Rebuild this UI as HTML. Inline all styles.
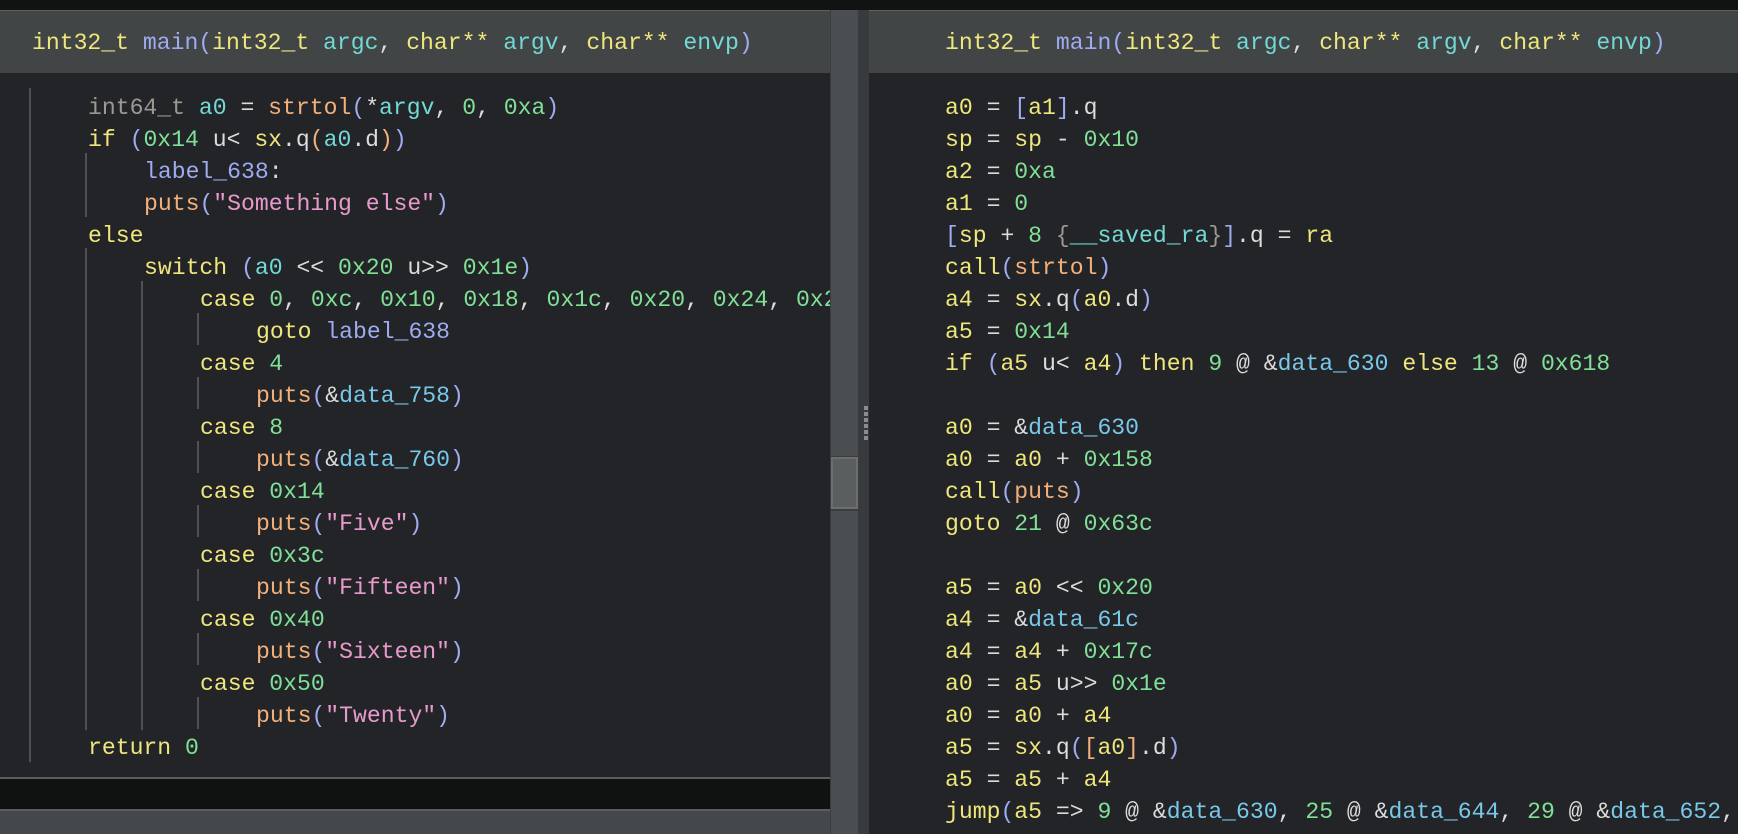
<!DOCTYPE html>
<html><head><meta charset="utf-8"><style>
*{margin:0;padding:0;box-sizing:border-box}
body{width:1738px;height:834px;background:#232427;position:relative;overflow:hidden;font-family:"Liberation Mono",monospace;font-size:23.1px;color:#dcdcdc}
.a{position:absolute}
.l{position:absolute;white-space:pre;line-height:32px;height:32px}
.y{color:#efe67c}.b{color:#9eabf0}.c{color:#72d9d6}.g{color:#80e096}.o{color:#f3b07a}.p{color:#e99acd}.w{color:#dcdcdc}.gr{color:#9c9893}.sc{color:#78c8ea}
.v{position:absolute;width:2px;background:#4e5053}
</style></head><body>
<div class="a" style="left:0;top:0;width:1738px;height:10px;background:#111313"></div>
<div class="a" style="left:0;top:10px;width:830px;height:767px;background:#232427;overflow:hidden">
 <div class="a" style="left:0;top:0;width:830px;height:63px;background:#424546;border-top:1px solid #5e6162"></div>
 <div class="l" style="left:32px;top:17px"><span class="y">int32_t</span> <span class="b">main(</span><span class="y">int32_t</span> <span class="c">argc</span>, <span class="y">char**</span> <span class="c">argv</span>, <span class="y">char**</span> <span class="c">envp</span><span class="b">)</span></div>
 <div class="v" style="left:29px;top:78px;height:674px"></div>
 <div class="v" style="left:85px;top:143px;height:64px"></div>
 <div class="v" style="left:85px;top:238px;height:482px"></div>
 <div class="v" style="left:141px;top:271px;height:449px"></div>
 <div class="v" style="left:197px;top:303px;height:32px"></div>
 <div class="v" style="left:197px;top:367px;height:32px"></div>
 <div class="v" style="left:197px;top:431px;height:32px"></div>
 <div class="v" style="left:197px;top:495px;height:32px"></div>
 <div class="v" style="left:197px;top:559px;height:32px"></div>
 <div class="v" style="left:197px;top:623px;height:32px"></div>
 <div class="v" style="left:197px;top:687px;height:32px"></div>
 <div class="l" style="left:88px;top:82px"><span class="gr">int64_t</span> <span class="c">a0</span> = <span class="o">strtol</span><span class="b">(</span>*<span class="c">argv</span>, <span class="g">0</span>, <span class="g">0xa</span><span class="b">)</span></div>
 <div class="l" style="left:88px;top:114px"><span class="y">if</span> <span class="b">(</span><span class="g">0x14</span> u&lt; <span class="y">sx</span>.q<span class="o">(</span><span class="c">a0</span>.d<span class="o">)</span><span class="b">)</span></div>
 <div class="l" style="left:144px;top:146px"><span class="b">label_638</span>:</div>
 <div class="l" style="left:144px;top:178px"><span class="o">puts</span><span class="b">(</span><span class="p">"Something else"</span><span class="b">)</span></div>
 <div class="l" style="left:88px;top:210px"><span class="y">else</span></div>
 <div class="l" style="left:144px;top:242px"><span class="y">switch</span> <span class="b">(</span><span class="c">a0</span> &lt;&lt; <span class="g">0x20</span> u&gt;&gt; <span class="g">0x1e</span><span class="b">)</span></div>
 <div class="l" style="left:200px;top:274px"><span class="y">case</span> <span class="g">0</span>, <span class="g">0xc</span>, <span class="g">0x10</span>, <span class="g">0x18</span>, <span class="g">0x1c</span>, <span class="g">0x20</span>, <span class="g">0x24</span>, <span class="g">0x28</span></div>
 <div class="l" style="left:256px;top:306px"><span class="y">goto</span> <span class="b">label_638</span></div>
 <div class="l" style="left:200px;top:338px"><span class="y">case</span> <span class="g">4</span></div>
 <div class="l" style="left:256px;top:370px"><span class="o">puts</span><span class="b">(</span>&amp;<span class="sc">data_758</span><span class="b">)</span></div>
 <div class="l" style="left:200px;top:402px"><span class="y">case</span> <span class="g">8</span></div>
 <div class="l" style="left:256px;top:434px"><span class="o">puts</span><span class="b">(</span>&amp;<span class="sc">data_760</span><span class="b">)</span></div>
 <div class="l" style="left:200px;top:466px"><span class="y">case</span> <span class="g">0x14</span></div>
 <div class="l" style="left:256px;top:498px"><span class="o">puts</span><span class="b">(</span><span class="p">"Five"</span><span class="b">)</span></div>
 <div class="l" style="left:200px;top:530px"><span class="y">case</span> <span class="g">0x3c</span></div>
 <div class="l" style="left:256px;top:562px"><span class="o">puts</span><span class="b">(</span><span class="p">"Fifteen"</span><span class="b">)</span></div>
 <div class="l" style="left:200px;top:594px"><span class="y">case</span> <span class="g">0x40</span></div>
 <div class="l" style="left:256px;top:626px"><span class="o">puts</span><span class="b">(</span><span class="p">"Sixteen"</span><span class="b">)</span></div>
 <div class="l" style="left:200px;top:658px"><span class="y">case</span> <span class="g">0x50</span></div>
 <div class="l" style="left:256px;top:690px"><span class="o">puts</span><span class="b">(</span><span class="p">"Twenty"</span><span class="b">)</span></div>
 <div class="l" style="left:88px;top:722px"><span class="y">return</span> <span class="g">0</span></div>
</div>
<div class="a" style="left:0;top:777px;width:830px;height:2px;background:#5b5d5e"></div>
<div class="a" style="left:0;top:779px;width:830px;height:30px;background:#101211"></div>
<div class="a" style="left:0;top:809px;width:830px;height:2px;background:#5b5d5e"></div>
<div class="a" style="left:0;top:811px;width:830px;height:23px;background:#45484a"></div>
<div class="a" style="left:830px;top:10px;width:29px;height:824px;background:#4a4e50;border-left:1px solid #3a3c3e;border-right:1px solid #3a3c3e"></div>
<div class="a" style="left:830px;top:456px;width:29px;height:55px;background:#3a3c3e"></div>
<div class="a" style="left:831px;top:457px;width:27px;height:52px;background:#5a5e5f;border:2px solid #6b6f70"></div>
<div class="a" style="left:859px;top:10px;width:10px;height:824px;background:#383b3d"></div>
<div class="a" style="left:864px;top:406px;width:4px;height:35px;background:repeating-linear-gradient(#8a8d8f 0 4px,transparent 4px 6px)"></div>
<div class="a" style="left:869px;top:10px;width:869px;height:824px;background:#232427;overflow:hidden">
 <div class="a" style="left:0;top:0;width:869px;height:63px;background:#424546;border-top:1px solid #5e6162"></div>
 <div class="l" style="left:76px;top:17px"><span class="y">int32_t</span> <span class="b">main(</span><span class="y">int32_t</span> <span class="c">argc</span>, <span class="y">char**</span> <span class="c">argv</span>, <span class="y">char**</span> <span class="c">envp</span><span class="b">)</span></div>
 <div class="l y" style="left:76px;top:82px">a0 <span class="w">=</span> <span class="b">[</span>a1<span class="b">]</span><span class="w">.q</span></div>
 <div class="l y" style="left:76px;top:114px">sp <span class="w">=</span> sp <span class="w">-</span> <span class="g">0x10</span></div>
 <div class="l y" style="left:76px;top:146px">a2 <span class="w">=</span> <span class="g">0xa</span></div>
 <div class="l y" style="left:76px;top:178px">a1 <span class="w">=</span> <span class="g">0</span></div>
 <div class="l y" style="left:76px;top:210px"><span class="b">[</span>sp <span class="w">+</span> <span class="g">8</span> <span class="gr">{</span><span class="c">__saved_ra</span><span class="gr">}</span><span class="b">]</span><span class="w">.q =</span> ra</div>
 <div class="l y" style="left:76px;top:242px">call<span class="b">(</span><span class="o">strtol</span><span class="b">)</span></div>
 <div class="l y" style="left:76px;top:274px">a4 <span class="w">=</span> sx<span class="w">.q</span><span class="b">(</span>a0<span class="w">.d</span><span class="b">)</span></div>
 <div class="l y" style="left:76px;top:306px">a5 <span class="w">=</span> <span class="g">0x14</span></div>
 <div class="l y" style="left:76px;top:338px">if <span class="b">(</span>a5 <span class="w">u&lt;</span> a4<span class="b">)</span> then <span class="g">9</span> <span class="w">@ &amp;</span><span class="sc">data_630</span> else <span class="g">13</span> <span class="w">@</span> <span class="g">0x618</span></div>
 <div class="l y" style="left:76px;top:402px">a0 <span class="w">= &amp;</span><span class="sc">data_630</span></div>
 <div class="l y" style="left:76px;top:434px">a0 <span class="w">=</span> a0 <span class="w">+</span> <span class="g">0x158</span></div>
 <div class="l y" style="left:76px;top:466px">call<span class="b">(</span><span class="o">puts</span><span class="b">)</span></div>
 <div class="l y" style="left:76px;top:498px">goto <span class="g">21</span> <span class="w">@</span> <span class="g">0x63c</span></div>
 <div class="l y" style="left:76px;top:562px">a5 <span class="w">=</span> a0 <span class="w">&lt;&lt;</span> <span class="g">0x20</span></div>
 <div class="l y" style="left:76px;top:594px">a4 <span class="w">= &amp;</span><span class="sc">data_61c</span></div>
 <div class="l y" style="left:76px;top:626px">a4 <span class="w">=</span> a4 <span class="w">+</span> <span class="g">0x17c</span></div>
 <div class="l y" style="left:76px;top:658px">a0 <span class="w">=</span> a5 <span class="w">u&gt;&gt;</span> <span class="g">0x1e</span></div>
 <div class="l y" style="left:76px;top:690px">a0 <span class="w">=</span> a0 <span class="w">+</span> a4</div>
 <div class="l y" style="left:76px;top:722px">a5 <span class="w">=</span> sx<span class="w">.q</span><span class="b">(</span><span class="o">[</span>a0<span class="o">]</span><span class="w">.d</span><span class="b">)</span></div>
 <div class="l y" style="left:76px;top:754px">a5 <span class="w">=</span> a5 <span class="w">+</span> a4</div>
 <div class="l y" style="left:76px;top:786px">jump<span class="b">(</span>a5 <span class="w">=&gt;</span> <span class="g">9</span> <span class="w">@ &amp;</span><span class="sc">data_630</span><span class="w">,</span> <span class="g">25</span> <span class="w">@ &amp;</span><span class="sc">data_644</span><span class="w">,</span> <span class="g">29</span> <span class="w">@ &amp;</span><span class="sc">data_652</span><span class="w">,</span></div>
</div>
</body></html>
